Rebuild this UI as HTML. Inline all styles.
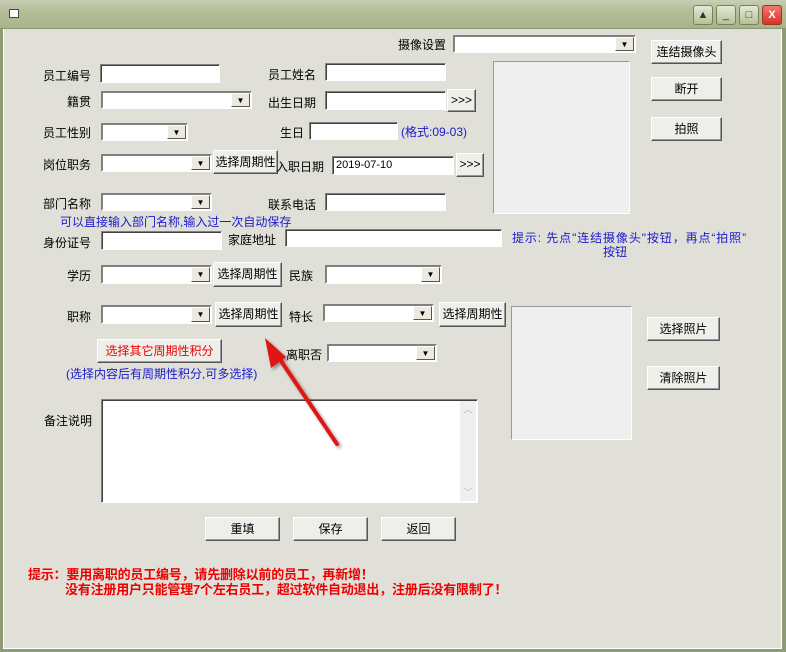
<!DOCTYPE html>
<html><head><meta charset="utf-8"><style>
*{box-sizing:border-box;margin:0;padding:0}
body{width:786px;height:652px;overflow:hidden;background:#e0e0d8;font:12px "Liberation Sans","Noto Sans CJK SC","WenQuanYi Zen Hei",sans-serif;color:#000;position:relative}
.tb{position:absolute;left:0;top:0;width:786px;height:29px;background:linear-gradient(#c8ceb4,#b4bd98 40%,#a9b38b);border-bottom:1px solid #8a9a70}
.fr{position:absolute;left:0;top:29px;width:786px;height:623px;border:3px solid #8d9c76;border-top:none;border-right:4px solid #8d9c76;box-shadow:inset 1px 0 #fff,inset -1px -1px #fff}
.wb{position:absolute;top:5px;width:20px;height:20px;border:1px solid #74845a;border-radius:3px;background:linear-gradient(#e4e9d4,#b6c19a);font-size:11px;text-align:center;line-height:18px;color:#333}
.a{position:absolute;white-space:nowrap}
.in{position:absolute;background:#fff;border:1px solid #fff;border-top-color:#808080;border-left-color:#808080;box-shadow:inset 1px 1px #404040}
.cb{position:absolute;background:#fff;border:2px solid;border-color:#808080 #fff #fff #808080}
.cb::after{content:"▼";position:absolute;right:0;top:0;bottom:0;width:17px;background:#ece9e0;border:1px solid;border-color:#fff #555 #555 #fff;font-size:8px;text-align:center;line-height:13px}
.bt{position:absolute;background:#eeeeea;border:1px solid;border-color:#fff #555 #555 #fff;box-shadow:inset -1px -1px #999;text-align:center;font-size:12px;white-space:nowrap}
.blue{color:#1a1acc}
.red{color:#e00;font-weight:bold;font-size:13px;letter-spacing:-0.2px}
.pb{position:absolute;background:#efefef;border:1px solid;border-color:#999 #fff #fff #999}
</style></head><body>
<div class="tb"></div>
<div class="a" style="left:9px;top:9px;width:10px;height:9px;border:1px solid #445;background:#fff"></div>
<div class="wb" style="left:693px">▲</div>
<div class="wb" style="left:716px">_</div>
<div class="wb" style="left:739px">□</div>
<div class="wb" style="left:762px;background:linear-gradient(#f07a6a,#d8322a);color:#fff;font-weight:bold;border-color:#a03020">X</div>
<div class="fr"></div>

<div class="a" style="left:398px;top:36px">摄像设置</div>
<div class="cb" style="left:453px;top:35px;width:183px;height:18px"></div>
<div class="bt" style="left:651px;top:40px;width:71px;height:24px;line-height:22px">连结摄像头</div>
<div class="bt" style="left:651px;top:77px;width:71px;height:24px;line-height:22px">断开</div>
<div class="bt" style="left:651px;top:117px;width:71px;height:24px;line-height:22px">拍照</div>
<div class="pb" style="left:493px;top:61px;width:137px;height:153px"></div>

<div class="a" style="left:43px;top:67px">员工编号</div>
<div class="in" style="left:100px;top:64px;width:120px;height:19px"></div>
<div class="a" style="left:268px;top:66px">员工姓名</div>
<div class="in" style="left:325px;top:63px;width:121px;height:18px"></div>

<div class="a" style="left:67px;top:93px">籍贯</div>
<div class="cb" style="left:101px;top:91px;width:151px;height:18px"></div>
<div class="a" style="left:268px;top:94px">出生日期</div>
<div class="in" style="left:325px;top:91px;width:121px;height:19px"></div>
<div class="bt" style="left:447px;top:89px;width:29px;height:23px;line-height:20px">&gt;&gt;&gt;</div>

<div class="a" style="left:43px;top:124px">员工性别</div>
<div class="cb" style="left:101px;top:123px;width:87px;height:18px"></div>
<div class="a" style="left:280px;top:124px">生日</div>
<div class="in" style="left:309px;top:122px;width:89px;height:18px"></div>
<div class="a blue" style="left:401px;top:123px">(格式:09-03)</div>

<div class="a" style="left:43px;top:156px">岗位职务</div>
<div class="cb" style="left:101px;top:154px;width:111px;height:18px"></div>
<div class="bt" style="left:213px;top:150px;width:65px;height:24px;line-height:22px">选择周期性</div>
<div class="a" style="left:276px;top:158px">入职日期</div>
<div class="in" style="left:332px;top:156px;width:122px;height:19px;padding-left:3px;line-height:16px;font-size:11px">2019-07-10</div>
<div class="bt" style="left:456px;top:153px;width:28px;height:24px;line-height:21px">&gt;&gt;&gt;</div>

<div class="a" style="left:43px;top:195px">部门名称</div>
<div class="cb" style="left:101px;top:193px;width:111px;height:18px"></div>
<div class="a" style="left:268px;top:196px">联系电话</div>
<div class="in" style="left:325px;top:193px;width:121px;height:18px"></div>
<div class="a blue" style="left:60px;top:213px">可以直接输入部门名称,输入过一次自动保存</div>

<div class="a" style="left:43px;top:234px">身份证号</div>
<div class="in" style="left:101px;top:231px;width:121px;height:19px"></div>
<div class="a" style="left:228px;top:231px">家庭地址</div>
<div class="in" style="left:285px;top:229px;width:217px;height:18px"></div>
<div class="a blue" style="left:512px;top:229px;letter-spacing:0.9px">提示: 先点"连结摄像头"按钮，再点“拍照”</div>
<div class="a blue" style="left:603px;top:243px">按钮</div>

<div class="a" style="left:67px;top:267px">学历</div>
<div class="cb" style="left:101px;top:265px;width:111px;height:19px"></div>
<div class="bt" style="left:213px;top:262px;width:69px;height:25px;line-height:23px">选择周期性</div>
<div class="a" style="left:289px;top:267px">民族</div>
<div class="cb" style="left:325px;top:265px;width:117px;height:19px"></div>

<div class="a" style="left:67px;top:308px">职称</div>
<div class="cb" style="left:101px;top:305px;width:111px;height:19px"></div>
<div class="bt" style="left:215px;top:302px;width:67px;height:25px;line-height:23px">选择周期性</div>
<div class="a" style="left:289px;top:308px">特长</div>
<div class="cb" style="left:323px;top:304px;width:111px;height:18px"></div>
<div class="bt" style="left:439px;top:302px;width:67px;height:25px;line-height:23px">选择周期性</div>
<div class="pb" style="left:511px;top:306px;width:121px;height:134px"></div>
<div class="bt" style="left:647px;top:317px;width:73px;height:24px;line-height:22px">选择照片</div>
<div class="bt" style="left:647px;top:366px;width:73px;height:24px;line-height:22px">清除照片</div>

<div class="bt" style="left:97px;top:339px;width:125px;height:24px;line-height:22px;color:#e00">选择其它周期性积分</div>
<div class="a blue" style="left:66px;top:365px">(选择内容后有周期性积分,可多选择)</div>
<div class="a" style="left:286px;top:346px">离职否</div>
<div class="cb" style="left:327px;top:344px;width:110px;height:18px"></div>

<div class="a" style="left:44px;top:412px">备注说明</div>
<div class="in" style="left:101px;top:399px;width:377px;height:104px"></div>
<div class="a" style="left:460px;top:401px;width:16px;height:100px;background:#efefef;color:#bbb;font-size:10px;text-align:center">︿<div style="position:absolute;bottom:2px;width:16px">﹀</div></div>

<div class="bt" style="left:205px;top:517px;width:75px;height:24px;line-height:22px">重填</div>
<div class="bt" style="left:293px;top:517px;width:75px;height:24px;line-height:22px">保存</div>
<div class="bt" style="left:381px;top:517px;width:75px;height:24px;line-height:22px">返回</div>

<div class="a red" style="left:28px;top:564px">提示：要用离职的员工编号，请先删除以前的员工，再新增！</div>
<div class="a red" style="left:65px;top:579px">没有注册用户只能管理7个左右员工，超过软件自动退出，注册后没有限制了！</div>

<svg class="a" style="left:0;top:0" width="786" height="652">
<defs><filter id="s"><feDropShadow dx="2" dy="2" stdDeviation="1.5" flood-opacity="0.4"/></filter></defs>
<g filter="url(#s)"><line x1="337" y1="444" x2="275" y2="352" stroke="#e01818" stroke-width="4" stroke-linecap="round"/>
<polygon points="265,338 271,368 286,357" fill="#e01818"/></g>
</svg>
</body></html>
